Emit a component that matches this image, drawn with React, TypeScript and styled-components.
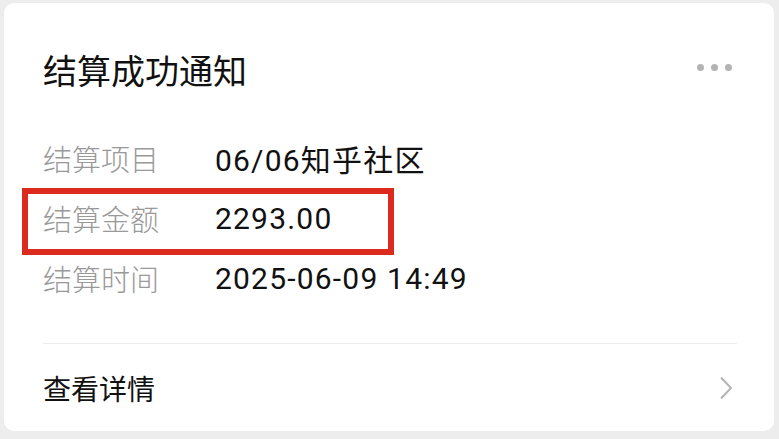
import React from "react";
import styled, {createGlobalStyle} from "styled-components";

const GlobalStyle = createGlobalStyle`
  html, body {
    margin: 0;
    padding: 0;
    background: #ededed;
  }
  body {
    font-family: Roboto, "Noto Sans CJK SC", sans-serif;
    -webkit-font-smoothing: antialiased;
  }
`;

const Page = styled.div`
  width: 779px;
  height: 439px;
  padding: 3px 5px 8px 4px;
  box-sizing: border-box;
`;

const Card = styled.div`
  height: 428px;
  background: #ffffff;
  border-radius: 10px;
  padding: 0 37px 0 39px;
  box-sizing: border-box;
  display: flex;
  flex-direction: column;
`;

const Header = styled.div`
  display: flex;
  align-items: center;
  justify-content: space-between;
  padding-top: 48px;
  height: 38px;
  margin-bottom: 39px;
`;

const Title = styled.div`
  font-family: "Noto Sans CJK SC", sans-serif;
  font-size: 34px;
  line-height: 38px;
  color: #111111;
`;

const More = styled.div`
  display: flex;
  gap: 7px;
  padding-right: 5px;
  margin-top: -6px;
`;

const Dot = styled.span`
  width: 7px;
  height: 7px;
  border-radius: 50%;
  background: #b3b3b3;
`;

const Rows = styled.div`
  display: flex;
  flex-direction: column;
  padding-bottom: 35px;
  border-bottom: 1px solid #ebebeb;
`;

const Row = styled.div`
  position: relative;
  display: grid;
  grid-template-columns: 172px 1fr;
  align-items: center;
  height: 60px;
`;

const Label = styled.div`
  font-family: "Noto Sans CJK SC", sans-serif;
  font-size: 29px;
  font-weight: 300;
  color: #999999;
`;

const Value = styled.div`
  font-size: 30px;
  color: #111111;
  letter-spacing: 1.2px;
`;

const Highlight = styled.div`
  position: absolute;
  left: -21px;
  top: 0;
  width: 372px;
  height: 67px;
  border: 6px solid #dc2a1f;
  box-sizing: border-box;
  pointer-events: none;
`;

const Footer = styled.div`
  flex: 1;
  display: flex;
  align-items: center;
  justify-content: space-between;
`;

const FooterText = styled.div`
  font-family: "Noto Sans CJK SC", sans-serif;
  font-size: 28px;
  color: #111111;
`;

const Chevron = styled.svg`
  width: 14px;
  height: 24px;
  margin-right: 4px;
`;

const rows = [
    {label: "结算项目", value: "06/06知乎社区", marked: false},
    {label: "结算金额", value: "2293.00", marked: true},
    {label: "结算时间", value: "2025-06-09 14:49", marked: false},
];

const App: React.FC = () => {
    return (
        <Page>
            <GlobalStyle/>
            <Card>
                <Header>
                    <Title>结算成功通知</Title>
                    <More>
                        <Dot/>
                        <Dot/>
                        <Dot/>
                    </More>
                </Header>
                <Rows>
                    {rows.map(r => (
                        <Row key={r.label}>
                            <Label>{r.label}</Label>
                            <Value>{r.value}</Value>
                            {r.marked ? <Highlight/> : null}
                        </Row>
                    ))}
                </Rows>
                <Footer>
                    <FooterText>查看详情</FooterText>
                    <Chevron viewBox="0 0 14 24">
                        <path d="M2 1.5 L12 12 L2 22.5" fill="none" stroke="#b5b5b5" strokeWidth="2"/>
                    </Chevron>
                </Footer>
            </Card>
        </Page>
    );
};

export default App;
